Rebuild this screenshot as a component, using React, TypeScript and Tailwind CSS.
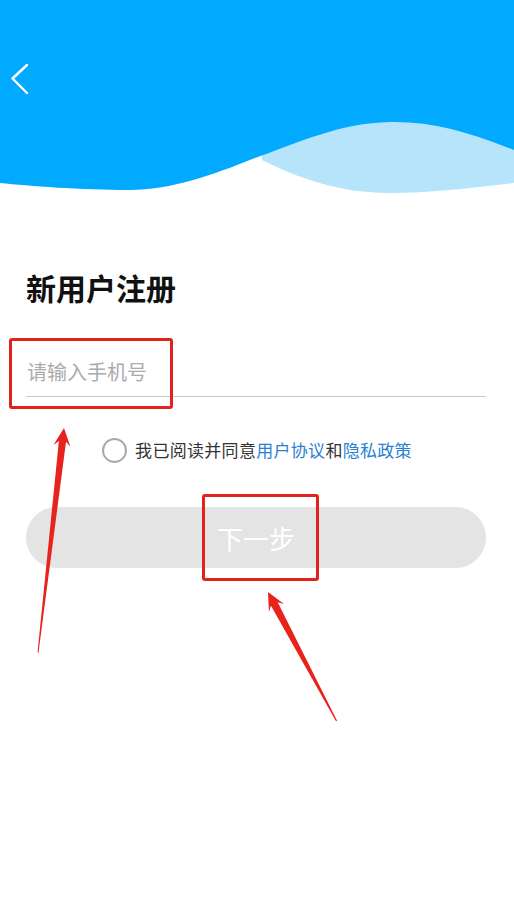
import React from "react";

export default function App() {
  return (
    <div
      className="relative w-[514px] h-[900px] bg-white overflow-hidden"
      style={{ fontFamily: '"Noto Sans CJK SC", "Noto Sans", sans-serif' }}
    >
      {/* Header with waves */}
      <div className="relative w-full h-[200px]">
        <svg
          className="absolute inset-0"
          width="514"
          height="200"
          viewBox="0 0 514 200"
          preserveAspectRatio="none"
        >
          <path
            d="M262,150 C305,130 350,112 390,112 L514,112 V183 C470,188 430,193 390,193 C340,193 298,178 262,160 Z"
            fill="#b5e4fb"
          />
          <path
            d="M0,0 H514 V150 C470,132 430,121 390,122 C340,123 300,142 255,158 C210,176 170,190 130,190 C80,190 30,186 0,183 Z"
            fill="#01aaff"
          />
        </svg>
        <div className="relative pt-[63px] pl-[10px]">
          <svg width="20" height="32" viewBox="0 0 20 32" fill="none">
            <path
              d="M17,2 L2.5,15.5 L17,30"
              stroke="#ffffff"
              strokeWidth="2.4"
              strokeLinecap="round"
              strokeLinejoin="round"
            />
          </svg>
        </div>
      </div>

      {/* Title */}
      <div className="mt-[72px] pl-[26px] text-[30px] leading-[30px] font-bold text-[#111111]">
        新用户注册
      </div>

      {/* Phone input */}
      <div className="mt-[46px] ml-[26px] mr-[28px] h-[49px] border-b border-[#c8c8c8] flex items-center">
        <span className="pl-[1px] text-[20px] leading-[24px] text-[#ababab]">请输入手机号</span>
      </div>

      {/* Agreement */}
      <div className="mt-[40px] h-[26px] flex items-center justify-center gap-[8px]">
        <div className="w-[25px] h-[25px] rounded-full border-2 border-[#a9a9a9]" />
        <div className="text-[17px] leading-[22px] tracking-[0.3px] text-[#333333]">
          我已阅读并同意<span className="text-[#2a7fd4]">用户协议</span>和
          <span className="text-[#2a7fd4]">隐私政策</span>
        </div>
      </div>

      {/* Button */}
      <div className="mt-[44px] ml-[26px] mr-[28px] h-[61px] rounded-full bg-[#e4e4e4] flex items-center justify-center">
        <span className="text-[26px] leading-[30px] text-white">下一步</span>
      </div>

      {/* Annotations */}
      <div className="absolute left-[9px] top-[338px] w-[164px] h-[71px] border-[3px] border-[#e3221c] rounded-[3px]" />
      <div className="absolute left-[202px] top-[494px] w-[117px] h-[87px] border-[3px] border-[#e3221c] rounded-[3px]" />
      <svg className="absolute left-0 top-0" width="514" height="900" viewBox="0 0 514 900">
        <g transform="translate(64,428) rotate(6.6)">
          <polygon points="0,0 8.5,18 3.6,13.5 0.5,226 -0.5,226 -3.6,13.5 -8.5,18" fill="#e8231d" />
        </g>
        <g transform="translate(268,592) rotate(-28)">
          <polygon points="0,0 8.5,18 3.8,13.5 0.6,146 -0.6,146 -3.8,13.5 -8.5,18" fill="#e8231d" />
        </g>
      </svg>
    </div>
  );
}
